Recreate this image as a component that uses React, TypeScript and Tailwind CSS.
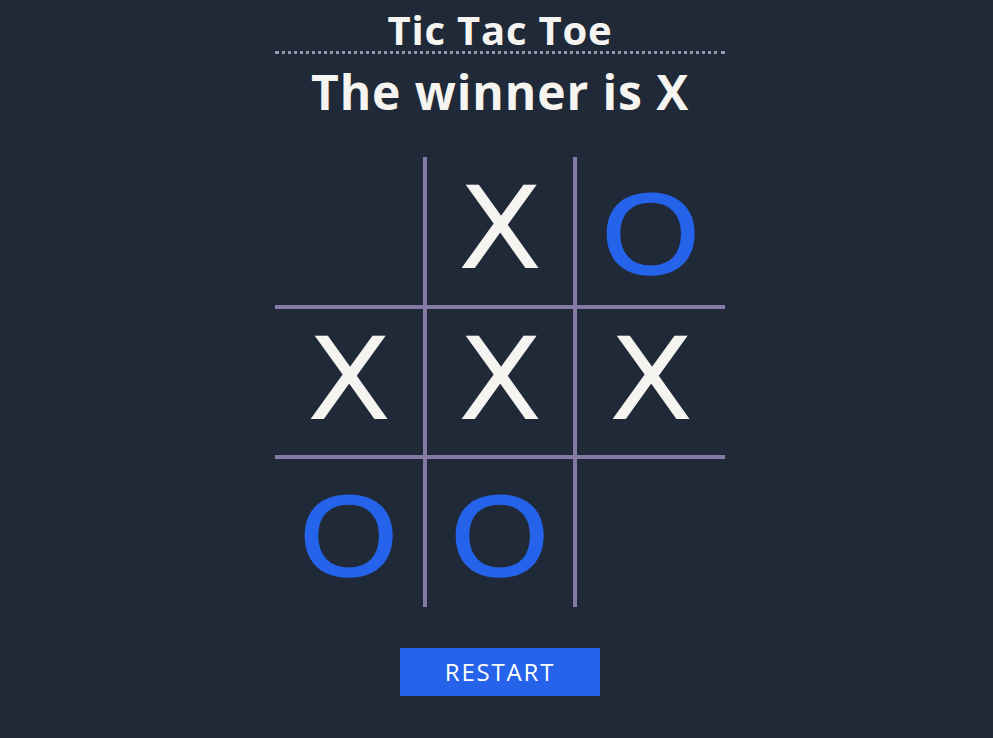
import React from "react";

const board: (string | null)[] = [null, "X", "O", "X", "X", "X", "O", "O", null];

function Cell({ v, i }: { v: string | null; i: number }) {
  const col = i % 3;
  const row = Math.floor(i / 3);
  const cls = [
    "w-[150px] h-[150px] flex items-center justify-center border-[#857aa3]",
    col === 0 ? "border-r-2" : col === 1 ? "border-x-2" : "border-l-2",
    row === 0 ? "border-b-2" : row === 1 ? "border-y-2" : "border-t-2",
  ].join(" ");
  return (
    <div className={cls}>
      {v === "X" && (
        <span className="mb-[4px] scale-x-[1.08] text-[114px] leading-none text-[#f6f4f1] font-['DejaVu_Sans',sans-serif]">
          X
        </span>
      )}
      {v === "O" && (
        <span className="mt-[6px] scale-x-[1.1] text-[115px] leading-none text-[#2563eb] [-webkit-text-stroke:1.5px_#2563eb] font-['Liberation_Sans',sans-serif]">
          O
        </span>
      )}
    </div>
  );
}

export default function App() {
  return (
    <div className="min-h-[738px] w-full bg-[#1f2937] font-['Open_Sans',sans-serif]">
      <div className="ml-[275px] w-[450px] flex flex-col items-center">
        <h1 className="w-full pt-[9px] text-center text-[40px] leading-[42px] tracking-[0.8px] font-bold text-[#f6f4f1] border-b-[3px] border-dotted border-[#9a97ac]">
          Tic Tac Toe
        </h1>
        <h2 className="mt-[4px] text-[48px] leading-[67px] tracking-[0.9px] font-bold text-[#f6f4f1]">
          The winner is X
        </h2>
        <div className="mt-[32px] grid grid-cols-3">
          {board.map((v, i) => (
            <Cell key={i} v={v} i={i} />
          ))}
        </div>
        <button className="mt-[41px] w-[200px] h-[48px] bg-[#2563eb] text-white text-[24px] font-medium tracking-[1.8px] flex items-center justify-center">
          RESTART
        </button>
      </div>
    </div>
  );
}
